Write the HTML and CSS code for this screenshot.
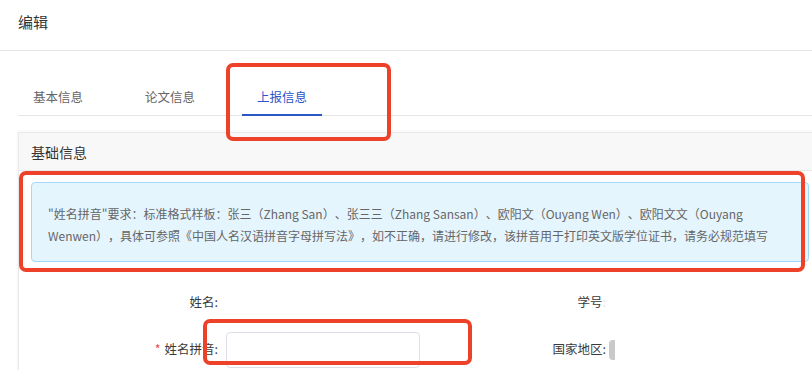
FILE: index.html
```html
<!DOCTYPE html>
<html lang="zh-CN">
<head>
<meta charset="utf-8">
<title>编辑</title>
<link rel="stylesheet" href="styles.css">
</head>
<body>
<div class="dialog">
  <header class="dialog-header">
    <h2 class="dialog-title">编辑</h2>
  </header>
  <div class="dialog-body">
    <nav class="tabs">
      <div class="tab">基本信息</div>
      <div class="tab">论文信息</div>
      <div class="tab tab-active">上报信息</div>
    </nav>
    <section class="card">
      <div class="card-header">基础信息</div>
      <div class="card-body">
        <div class="alert">"姓名拼音"要求：标准格式样板：张三（Zhang San）、张三三（Zhang Sansan）、欧阳文（Ouyang Wen）、欧阳文文（Ouyang Wenwen），具体可参照《中国人名汉语拼音字母拼写法》，如不正确，请进行修改，该拼音用于打印英文版学位证书，请务必规范填写</div>
        <div class="form-grid">
          <div class="field">
            <label class="field-label">姓名:</label>
            <div class="field-value"></div>
          </div>
          <div class="field">
            <label class="field-label">学号<span class="faint">:</span></label>
            <div class="field-value"></div>
          </div>
          <div class="field">
            <label class="field-label"><span class="req">*</span>姓名拼音:</label>
            <input class="input" type="text">
          </div>
          <div class="field">
            <label class="field-label">国家地区:</label>
            <span class="select-stub"></span>
          </div>
        </div>
      </div>
    </section>
  </div>
  <div class="mark mark-tab"></div>
  <div class="mark mark-alert"></div>
  <div class="mark mark-input"></div>
</div>
</body>
</html>
```
FILE: styles.css
```css
html, body {
  margin: 0;
  padding: 0;
  background: #ffffff;
  overflow: hidden;
}
body {
  font-family: "Noto Sans CJK SC", "Microsoft YaHei", "Noto Sans", sans-serif;
  color: #333;
  text-spacing-trim: space-all;
}
.dialog {
  position: relative;
  width: 840px;
  height: 370px;
  overflow: hidden;
}
.dialog-header {
  height: 50px;
  border-bottom: 1px solid #e6e6e6;
  padding: 0 18px;
  box-sizing: content-box;
}
.dialog-title {
  margin: 0;
  padding-top: 11px;
  font-size: 15px;
  font-weight: normal;
  line-height: 22px;
  color: #333;
}
.dialog-body {
  padding-left: 18px;
}
.tabs {
  display: flex;
  gap: 32px;
  padding-top: 35px;
  border-bottom: 1px solid #e6e6e6;
}
.tab {
  position: relative;
  width: 80px;
  text-align: center;
  font-size: 12.5px;
  line-height: 22px;
  padding-bottom: 7px;
  color: #666;
}
.tab-active {
  color: #2b56c8;
}
.tab-active::after {
  content: "";
  position: absolute;
  left: 0;
  right: 0;
  bottom: -1px;
  height: 2px;
  background: #2b56c8;
}
.card {
  margin-top: 16px;
  width: 804px;
  box-sizing: border-box;
  border: 1px solid #e9e9e9;
  box-shadow: 0 0 4px rgba(0, 0, 0, 0.06);
  background: #fff;
  height: 260px;
}
.card-header {
  background: #f8f8f8;
  border-bottom: 1px solid #e9e9e9;
  padding: 8px 12px 7px;
  font-size: 14px;
  line-height: 22px;
  color: #333;
}
.card-body {
  padding: 11px 12px 0;
}
.alert {
  background: #e5f5fe;
  border: 1px solid #a3d8fb;
  border-radius: 4px;
  padding: 20px 26px 14px 16px;
  font-size: 12px;
  line-height: 22px;
  color: #666;
}
.form-grid {
  margin-top: 23px;
  display: grid;
  grid-template-columns: 388px 388px;
  row-gap: 13px;
}
.field {
  display: flex;
  align-items: center;
  height: 34px;
}
.field-label {
  width: 195px;
  box-sizing: border-box;
  padding-right: 8px;
  text-align: right;
  font-size: 12.5px;
  line-height: 22px;
  color: #3a3a3a;
  flex-shrink: 0;
}
.faint {
  color: #e4e4e4;
}
.req {
  color: #f04848;
  margin-right: 4px;
}
.input {
  width: 194px;
  height: 36px;
  margin-top: 2px;
  box-sizing: border-box;
  border: 1px solid #dcdfe6;
  border-radius: 4px;
  outline: none;
  background: #fff;
  padding: 0 10px;
  font: inherit;
}
.select-stub {
  width: 6px;
  height: 20px;
  margin-left: -5px;
  margin-top: 2px;
  border-radius: 4px 0 0 4px;
  background: #c9c9c9;
}
.mark {
  position: absolute;
  border: 4px solid #ee4129;
  border-radius: 7px;
  box-sizing: border-box;
  pointer-events: none;
}
.mark-tab {
  left: 226px;
  top: 63px;
  width: 165px;
  height: 78px;
}
.mark-alert {
  left: 19px;
  top: 171px;
  width: 786px;
  height: 101px;
}
.mark-input {
  left: 203px;
  top: 319px;
  width: 269px;
  height: 46px;
}
```
